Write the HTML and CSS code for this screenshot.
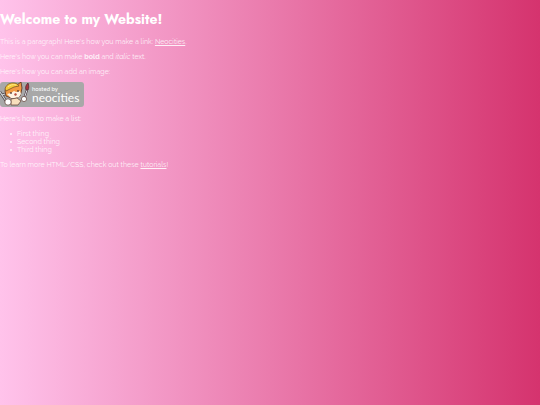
FILE: index.html
```html
<!DOCTYPE html>
<html lang="en">
  <head>
    <meta charset="UTF-8" />
    <meta name="viewport" content="width=device-width, initial-scale=1.0" />
    <title>My Website</title>
    <link rel="stylesheet" href="styles.css">
  </head>
  <body>
    <h1>Welcome to my Website!</h1>

    <p>This is a paragraph! Here's how you make a link: <a href="#neocities">Neocities</a>.</p>

    <p>Here's how you can make <strong>bold</strong> and <em>italic</em> text.</p>

    <p>Here's how you can add an image:</p>

    <svg class="badge" viewBox="0 0 84 25" role="img" aria-label="hosted by neocities">
      <rect width="84" height="25" rx="3" fill="#a8a8a8" />
      <!-- wrench -->
      <path d="M0 10l2 3 3-1M2 13l4 6" fill="none" stroke="#4c4245" stroke-width="2.4" />
      <path d="M0 10l2 3 3-1M2 13l4 6" fill="none" stroke="#d3d8dd" stroke-width="1.1" />
      <!-- cat -->
      <path d="M5 9L6 5l3 0 8-2 4-3 1 6-1 5-1 3-4 2-5 0-5-2z" fill="#f39a43" stroke="#553022" stroke-width=".8" />
      <path d="M7 12l4-1 3-2 2 1 4-1 1 3-2 3-4 1-4 0z" fill="#fff3e4" />
      <path d="M5 7c1-4 4-6 8-6 3 0 5 1 6 3l-5 1-8 4z" fill="#f5ca3a" stroke="#6f4822" stroke-width=".7" />
      <path d="M8 5c2-2 5-3 8-2" fill="none" stroke="#ffe889" />
      <path d="M11 10v2M18 8v2" stroke="#38252a" stroke-width="1.1" />
      <path d="M14 12l2-1 1 2-2 1z" fill="#b64c40" />
      <path d="M11 17l6-1 4 3-3 4-7 0z" fill="#f8dfbd" stroke="#5b3b32" stroke-width=".7" />
      <!-- brush -->
      <path d="M27 8l-3 9" stroke="#48333a" stroke-width="2.2" />
      <path d="M27 8l-3 9" stroke="#d8dce3" />
      <path d="M26 8c-1-3 0-5 2-7 1 3 1 5 0 7z" fill="#a93540" stroke="#532b33" stroke-width=".8" />
      <circle cx="8" cy="20" r="3.2" fill="#fff" stroke="#5b3b32" stroke-width=".7" />
      <circle cx="24" cy="17" r="2.6" fill="#fff" stroke="#5b3b32" stroke-width=".7" />
      <text class="badge-small" x="32" y="9">hosted by</text>
      <text class="badge-name" x="32" y="20">neocities</text>
    </svg>

    <p>Here's how to make a list:</p>

    <ul>
      <li>First thing</li>
      <li>Second thing</li>
      <li>Third thing</li>
    </ul>

    <p>To learn more HTML/CSS, check out these <a href="#tutorials">tutorials</a>!</p>
  </body>
</html>
```
FILE: styles.css
```css
html {
  min-height: 100%;
  background: linear-gradient(to right, #ffc3eb, #d5336e);
}

body {
  margin: 0;
  color: rgba(255, 255, 255, 0.85);
  font-family: Raleway, "Open Sans", sans-serif;
  font-size: 7px;
  line-height: 8px;
}

h1 {
  margin: 10px 0 9px;
  color: #ffffff;
  font-family: Jost, Lato, sans-serif;
  font-size: 14px;
  font-weight: 700;
  line-height: 19px;
}

p,
ul {
  margin: 0 0 7px;
}

ul {
  padding-left: 10px;
  list-style: none;
}

li {
  display: flex;
  align-items: center;
  gap: 5px;
}

li::before {
  content: "";
  width: 2px;
  height: 2px;
  border-radius: 50%;
  background: currentColor;
}

a {
  color: inherit;
}

.badge {
  display: block;
  width: 84px;
  height: 25px;
  margin: -1px 0 8px;
}

.badge-small,
.badge-name {
  fill: #ffffff;
  font-family: Lato, sans-serif;
}

.badge-small {
  font-size: 6px;
}

.badge-name {
  font-size: 12px;
}
```
